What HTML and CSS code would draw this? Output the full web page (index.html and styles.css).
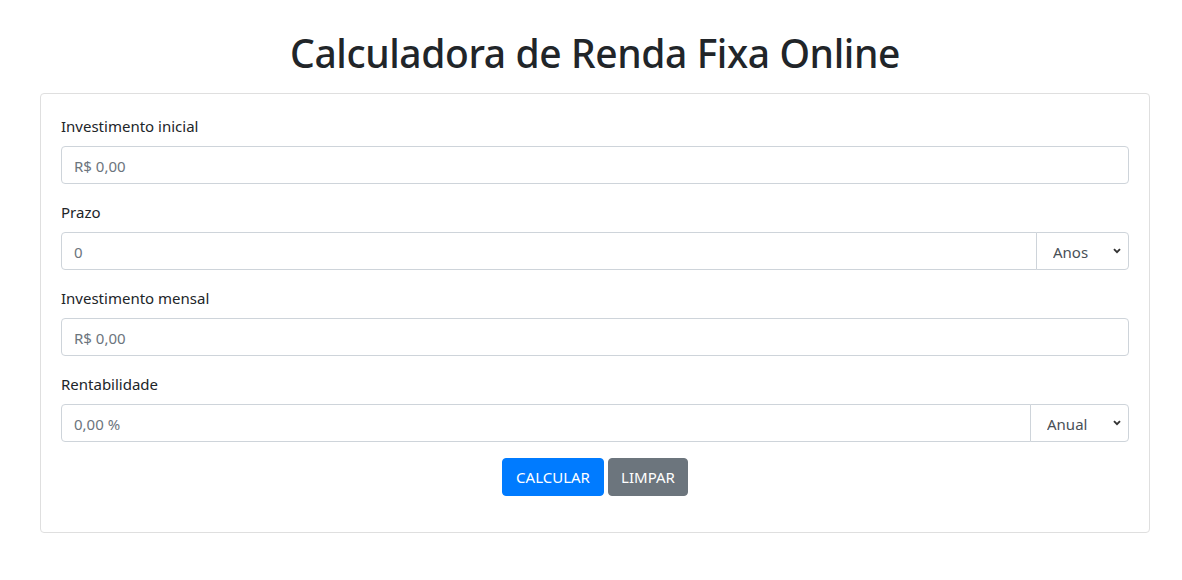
FILE: index.html
```html
<!DOCTYPE html>
<html lang="pt-BR">
<head>
<meta charset="utf-8">
<title>Calculadora de Renda Fixa Online</title>
<link rel="stylesheet" href="styles.css">
</head>
<body>
<div class="container">
  <h1 class="title">Calculadora de Renda Fixa Online</h1>
  <div class="card">
    <form class="card-body">
      <div class="form-group">
        <label class="label" for="inicial">Investimento inicial</label>
        <input class="form-control" id="inicial" type="text" placeholder="R$ 0,00">
      </div>
      <div class="form-group">
        <label class="label" for="prazo">Prazo</label>
        <div class="input-group">
          <input class="form-control grouped" id="prazo" type="text" placeholder="0">
          <select class="select select-anos">
            <option>Anos</option>
            <option>Meses</option>
          </select>
        </div>
      </div>
      <div class="form-group">
        <label class="label" for="mensal">Investimento mensal</label>
        <input class="form-control" id="mensal" type="text" placeholder="R$ 0,00">
      </div>
      <div class="form-group">
        <label class="label" for="rent">Rentabilidade</label>
        <div class="input-group">
          <input class="form-control grouped" id="rent" type="text" placeholder="0,00 %">
          <select class="select select-anual">
            <option>Anual</option>
            <option>Mensal</option>
          </select>
        </div>
      </div>
      <div class="form-group actions">
        <button class="btn btn-primary" type="button">CALCULAR</button>
        <button class="btn btn-secondary" type="reset">LIMPAR</button>
      </div>
    </form>
  </div>
</div>
</body>
</html>
```

FILE: styles.css
```css
* { box-sizing: border-box; }
html, body { margin: 0; padding: 0; background: #fff; }
body {
  font-family: "Noto Sans", "Open Sans", "DejaVu Sans", sans-serif;
  font-size: 16px;
  line-height: 24px;
  color: #212529;
}
.container {
  padding: 0 32px 0 40px;
}
.title {
  margin: 29px 0 16px;
  font-size: 39px;
  line-height: 48px;
  font-weight: 500;
  text-align: center;
  color: #212529;
  letter-spacing: -0.4px;
}
.card {
  border: 1px solid #dfdfdf;
  border-radius: 4px;
  background: #fff;
}
.card-body {
  margin: 0;
  padding: 20px;
}
.form-group {
  margin-bottom: 16px;
}
.label {
  display: block;
  margin-bottom: 8px;
  font-size: 15px;
}
.form-control {
  display: block;
  width: 100%;
  height: 38px;
  padding: 7px 12px 5px;
  font: inherit;
  font-size: 15px;
  line-height: 24px;
  color: #495057;
  background: #fff;
  border: 1px solid #ced4da;
  border-radius: 4px;
  outline: none;
}
.form-control::placeholder { color: #6c757d; opacity: 1; }
.input-group {
  display: flex;
}
.grouped {
  flex: 1 1 auto;
  width: 1%;
  border-top-right-radius: 0;
  border-bottom-right-radius: 0;
}
.select {
  flex: 0 0 auto;
  height: 38px;
  margin-left: -1px;
  padding: 6px 0 6px 16px;
  font: inherit;
  font-size: 15px;
  line-height: 26px;
  color: #495057;
  border: 1px solid #ced4da;
  border-radius: 0 4px 4px 0;
  -webkit-appearance: none;
  appearance: none;
  background: #fff url("data:image/svg+xml,%3Csvg xmlns='http://www.w3.org/2000/svg' width='8' height='6' viewBox='0 0 8 6'%3E%3Cpath d='M1 1.2 4 4.2 7 1.2' fill='none' stroke='%23333' stroke-width='1.9'/%3E%3C/svg%3E") no-repeat right 7px center / 8px 6px;
  outline: none;
}
.select-anos { width: 93px; }
.select-anual { width: 99px; }
.actions {
  display: flex;
  justify-content: center;
  gap: 4px;
}
.btn {
  height: 38px;
  padding: 6px 12px;
  font: inherit;
  font-size: 15px;
  color: #fff;
  border: 1px solid transparent;
  border-radius: 4px;
  cursor: pointer;
}
.btn-primary { background: #007bff; border-color: #007bff; width: 102px; }
.btn-secondary { background: #6c757d; border-color: #6c757d; width: 80px; }
```
